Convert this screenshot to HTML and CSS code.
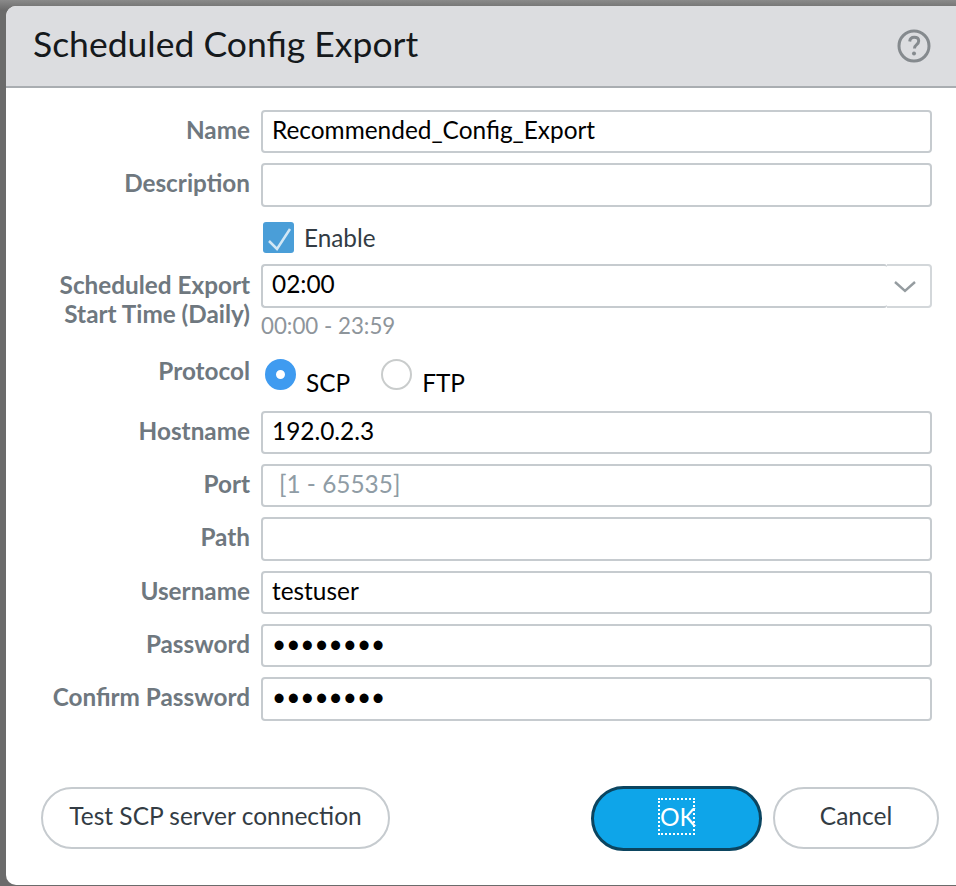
FILE: index.html
```html
<!DOCTYPE html>
<html lang="en">
<head>
    <meta charset="UTF-8">
    <meta name="viewport" content="width=device-width, initial-scale=1.0">
    <title>Scheduled Config Export</title>
    <link rel="stylesheet" href="styles.css">
</head>
<body>
    <div class="dialog">
        <header class="dialog-head">
            <h1>Scheduled Config Export</h1>
            <svg class="help" width="34" height="34" viewBox="0 0 34 34">
                <circle cx="17" cy="17" r="15" fill="none" stroke="#858a8e" stroke-width="3"/>
                <path d="M12.700 12.500c.3-2.800 2-4.200 4.500-4.200 2.700 0 4.500 1.500 4.500 3.800 0 1.800-1 2.800-2.300 3.800-1.200.9-1.900 1.800-1.900 3.600" fill="none" stroke="#858a8e" stroke-width="3"/>
                <circle cx="17" cy="24.500" r="2" fill="#858a8e"/>
            </svg>
        </header>

        <form class="fields">
            <div class="row">
                <label for="name">Name</label>
                <input type="text" id="name" value="Recommended_Config_Export">
            </div>
            <div class="row row-desc">
                <label for="desc">Description</label>
                <input type="text" id="desc">
            </div>
            <div class="row">
                <span></span>
                <label class="check-label">
                    <span class="checkbox">
                        <svg width="31" height="31" viewBox="0 0 31 31">
                            <path d="M6 19l8 8L27 7" fill="none" stroke="#fff" stroke-width="2.500" opacity="0.75"/>
                        </svg>
                    </span>
                    Enable
                </label>
            </div>
            <div class="row row-time">
                <label for="time">Scheduled Export<br>Start Time (Daily)</label>
                <div>
                    <div class="combo">
                        <input type="text" id="time" value="02:00">
                        <span class="combo-arrow">
                            <svg width="24" height="14" viewBox="0 0 24 14">
                                <path d="M2 2l10 9 10-9" fill="none" stroke="#959ca0" stroke-width="2.400"/>
                            </svg>
                        </span>
                    </div>
                    <div class="hint">00:00 - 23:59</div>
                </div>
            </div>
            <div class="row row-protocol">
                <label>Protocol</label>
                <div class="radios">
                    <span class="radio-item"><span class="radio radio-on"></span><span class="radio-text">SCP</span></span>
                    <span class="radio-item"><span class="radio"></span><span class="radio-text">FTP</span></span>
                </div>
            </div>
            <div class="row">
                <label for="host">Hostname</label>
                <input type="text" id="host" value="192.0.2.3">
            </div>
            <div class="row">
                <label for="port">Port</label>
                <input type="text" id="port" class="port" placeholder="[1 - 65535]">
            </div>
            <div class="row">
                <label for="path">Path</label>
                <input type="text" id="path">
            </div>
            <div class="row">
                <label for="user">Username</label>
                <input type="text" id="user" value="testuser">
            </div>
            <div class="row">
                <label for="pass">Password</label>
                <input type="password" id="pass" value="testpass">
            </div>
            <div class="row">
                <label for="pass2">Confirm Password</label>
                <input type="password" id="pass2" value="testpass">
            </div>
        </form>

        <div class="actions">
            <button type="button" class="btn btn-test">Test SCP server connection</button>
            <button type="button" class="btn btn-ok"><span class="focus-box">OK</span></button>
            <button type="button" class="btn btn-cancel">Cancel</button>
        </div>
    </div>
</body>
</html>
```

FILE: styles.css
```css
body {
    font-family: 'Lato', sans-serif;
    background: linear-gradient(#8a8a8a, #6b6b6b 10px);
    margin: 0;
    padding: 6px 0 0 6px;
    height: 880px;
    overflow: hidden;
}
.dialog {
    background: #fff;
    border-radius: 10px 0 0 10px;
    height: 879px;
    overflow: hidden;
}
.dialog-head {
    display: flex;
    justify-content: space-between;
    align-items: center;
    height: 80px;
    padding: 0 25px 0 27px;
    background: #dcdde0;
    border-bottom: 2px solid #a9adb1;
}
.dialog-head h1 {
    margin: 0;
    padding-bottom: 5px;
    font-size: 35.5px;
    font-weight: 400;
    color: #15191c;
}
.fields {
    padding: 22px 24px 0 0;
    width: 926px;
    box-sizing: border-box;
}
.row {
    display: grid;
    grid-template-columns: 244px 671px;
    column-gap: 11px;
    align-items: center;
    margin-bottom: 10px;
}
.row label {
    padding-bottom: 3px;
    text-align: right;
    font-size: 24.3px;
    font-weight: 700;
    line-height: 30px;
    color: #6f787f;
}
input[type="text"], input[type="password"] {
    display: block;
    width: 100%;
    height: 43.33px;
    box-sizing: border-box;
    padding: 0 9px 4px;
    font-family: 'Lato', sans-serif;
    font-size: 24.4px;
    color: #000;
    background: #fff;
    border: 2px solid #c6cbcf;
    border-radius: 4px;
    outline: none;
}
input.port {
    padding-left: 16px;
}
.port::placeholder {
    color: #8f9ca5;
    opacity: 1;
}
.row-desc {
    margin-bottom: 15px;
}
.row label.check-label {
    display: flex;
    align-items: center;
    gap: 10px;
    height: 32px;
    margin-left: 2px;
    padding-bottom: 0;
    text-align: left;
    font-weight: 400;
    color: #333c44;
}
.checkbox {
    display: block;
    width: 31px;
    height: 31px;
    background: #4a9ed8;
    border-radius: 3px;
}
.row-time {
    align-items: start;
    margin-bottom: 17px;
}
.row-time > label {
    padding: 6px 0 0;
    line-height: 29px;
}
.combo {
    display: flex;
}
.combo input[type="text"] {
    flex: 1;
    height: 44px;
    border-right: none;
    border-radius: 4px 3px 3px 4px;
}
.combo-arrow {
    display: flex;
    align-items: center;
    justify-content: center;
    flex: none;
    width: 45px;
    height: 44px;
    box-sizing: border-box;
    padding: 2px 8px 0 0;
    border: 2px solid #d3d7da;
    border-left: none;
    border-radius: 0 4px 4px 0;
}
.hint {
    margin-top: 4px;
    font-size: 22.3px;
    line-height: 28px;
    color: #8e959b;
}
.row-protocol {
    align-items: start;
    margin-bottom: 13px;
}
.row-protocol > label {
    margin-top: -1px;
    padding-bottom: 0;
}
.radios {
    display: flex;
    gap: 31px;
    padding: 2px 0 0 4px;
}
.radio-item {
    display: flex;
    gap: 10px;
}
.radio {
    display: block;
    width: 31px;
    height: 31px;
    box-sizing: border-box;
    background: #fff;
    border: 2px solid #c9cccc;
    border-radius: 50%;
}
.radio-on {
    border: 11px solid #3f9bf0;
}
.radio-text {
    padding-top: 9px;
    font-size: 24.4px;
    line-height: 30px;
    color: #000;
}
.actions {
    display: flex;
    align-items: center;
    margin-top: 65px;
    padding-left: 35px;
}
.btn {
    height: 62px;
    box-sizing: border-box;
    padding: 0 0 6px;
    font-family: 'Lato', sans-serif;
    font-size: 24.5px;
    color: #333c44;
    background: #fff;
    border: 2px solid #c6cbcf;
    border-radius: 31px;
    cursor: pointer;
}
.btn-test {
    width: 349px;
    margin-right: 201px;
}
.btn-ok {
    display: flex;
    align-items: center;
    justify-content: center;
    width: 171px;
    height: 65px;
    margin-right: 11px;
    padding-bottom: 3px;
    color: #fff;
    background: #0ea5e9;
    border: 3px solid #0b4560;
    border-radius: 33px;
}
.focus-box {
    display: block;
    width: 33px;
    line-height: 33px;
    white-space: nowrap;
    outline: 2px dotted #fff;
}
.btn-cancel {
    width: 166px;
}
```
